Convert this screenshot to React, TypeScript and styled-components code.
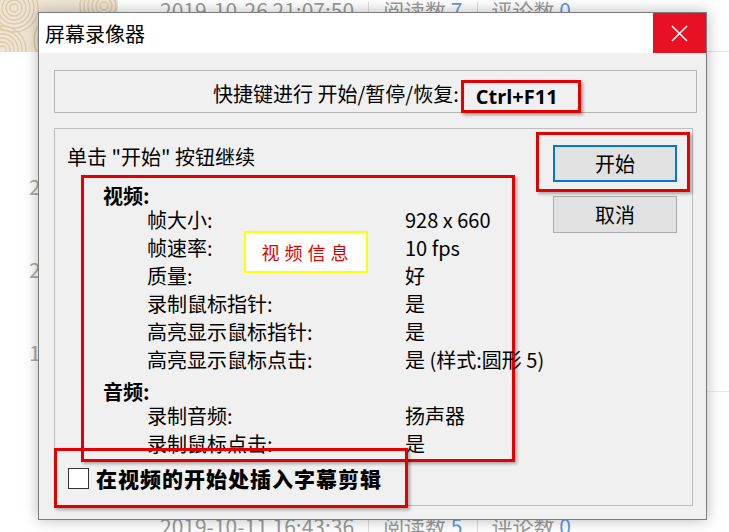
import React from "react"
import styled, { createGlobalStyle } from "styled-components"

const GlobalStyle = createGlobalStyle`
  html, body {
    margin: 0;
    padding: 0;
    background: #fff;
  }
  body {
    font-family: "Noto Sans CJK SC", "Noto Sans", sans-serif;
  }
`

const annotationRed = "#e30000"

const Page = styled.div`
  position: relative;
  width: 729px;
  height: 532px;
  overflow: hidden;
  background: #fff;
`

const Backdrop = styled.div`
  display: grid;
  grid-template-columns: 118px 1fr;
  grid-template-rows: 52px auto 1fr;
  height: 100%;
`

const Pattern = styled.svg`
  display: block;
  width: 118px;
  height: 52px;
  background: #efe5d4;
`

const HeaderCell = styled.div`
  border-bottom: 1px solid #eee3d2;
  overflow: hidden;
`

const Meta = styled.div<{ offset: number }>`
  margin-top: ${p => p.offset}px;
  padding-left: 42px;
  font-size: 21px;
  line-height: 28px;
  color: #9a9a9a;
  white-space: nowrap;
`

const Count = styled.span`
  color: #5f9bd8;
`

const Divider = styled.span`
  display: inline-block;
  width: 1px;
  height: 20px;
  margin: 0 14px;
  background: #dcdcdc;
  vertical-align: -3px;
`

const LeftMarks = styled.div`
  grid-row: 2 / 4;
  grid-column: 1;
  display: flex;
  flex-direction: column;
  gap: 62px;
  padding: 124px 0 0 29px;
  font-size: 21px;
  line-height: 21px;
  color: #a8a8a8;
`

const PostBody = styled.div`
  height: 339px;
  border-bottom: 1px solid #f1e8da;
`

const Footer = styled.div`
  padding-top: 120px;
`

const Dialog = styled.div`
  position: absolute;
  left: 38px;
  top: 12px;
  width: 669px;
  height: 508px;
  box-sizing: border-box;
  display: flex;
  flex-direction: column;
  border: 1px solid #7c7c7c;
  background: #f0f0f0;
  box-shadow: 0 0 14px rgba(0, 0, 0, 0.28);
`

const TitleBar = styled.div`
  display: flex;
  align-items: center;
  height: 40px;
  background: #fff;
`

const Title = styled.div`
  padding-left: 6px;
  font-size: 20px;
  color: #000;
`

const CloseButton = styled.div`
  margin-left: auto;
  align-self: stretch;
  width: 53px;
  display: flex;
  align-items: center;
  justify-content: center;
  background: #e81123;
`

const Content = styled.div`
  flex: 1;
  display: flex;
  flex-direction: column;
  min-height: 0;
  padding: 17px 9px 13px 15px;
`

const ShortcutBox = styled.div`
  height: 43px;
  box-sizing: border-box;
  display: flex;
  align-items: center;
  padding: 5px 0 0 158px;
  border: 1px solid #b5b5b5;
  font-size: 20px;
  line-height: 28px;
  color: #000;
  white-space: nowrap;
`

const Hotkey = styled.div`
  align-self: flex-end;
  height: 33px;
  box-sizing: border-box;
  margin: 0 0 -1px 2px;
  display: flex;
  align-items: center;
  padding: 0 20px 0 12px;
  border: 3px solid ${annotationRed};
  box-shadow: 2px 2px 3px rgba(0, 0, 0, 0.35);
  font-family: "Open Sans", "Noto Sans", sans-serif;
  font-weight: 700;
  font-size: 20px;
`

const GroupBox = styled.div`
  flex: 1;
  min-height: 0;
  margin: 15px 4px 0 0;
  display: grid;
  grid-template-columns: 1fr auto;
  border: 1px solid #bdbdbd;
`

const LeftPane = styled.div`
  display: flex;
  flex-direction: column;
`

const Prompt = styled.div`
  margin: 14px 0 0 12px;
  font-size: 20px;
  line-height: 28px;
  color: #000;
`

const InfoBox = styled.div`
  position: relative;
  width: 434px;
  box-sizing: border-box;
  margin: 4px 0 0 26px;
  padding: 8px 0 1px 19px;
  border: 3px solid ${annotationRed};
  box-shadow: 2px 2px 3px rgba(0, 0, 0, 0.3);
  font-size: 20px;
  color: #000;
`

const Heading = styled.div<{ spaced?: boolean }>`
  margin-top: ${p => (p.spaced ? 8 : 0)}px;
  font-weight: 700;
  line-height: 20px;
`

const InfoRow = styled.div`
  display: grid;
  grid-template-columns: 258px auto;
  padding-left: 44px;
  line-height: 28px;
  white-space: nowrap;
`

const Tag = styled.div`
  position: absolute;
  left: 160px;
  top: 53px;
  width: 124px;
  height: 42px;
  box-sizing: border-box;
  display: flex;
  align-items: center;
  justify-content: center;
  padding-left: 3px;
  border: 2px solid #ffff00;
  background: #fff;
  color: #e00000;
  font-size: 18px;
  letter-spacing: 5px;
`

const CheckAnnotation = styled.div`
  position: relative;
  width: 354px;
  height: 60px;
  box-sizing: border-box;
  margin: -14px 0 0 -1px;
  display: flex;
  align-items: center;
  gap: 7px;
  padding-left: 11px;
  border: 3px solid ${annotationRed};
  box-shadow: 2px 2px 3px rgba(0, 0, 0, 0.3);
`

const CheckBox = styled.span`
  width: 21px;
  height: 21px;
  box-sizing: border-box;
  border: 1px solid #333;
  background: #fff;
`

const CheckLabel = styled.span`
  font-size: 21px;
  font-weight: 900;
  letter-spacing: 1px;
  color: #000;
  white-space: nowrap;
`

const RightPane = styled.div`
  display: flex;
  flex-direction: column;
  align-items: flex-end;
  padding: 3px 2px 0 0;
`

const ButtonMark = styled.div`
  padding: 10px 10px 7px 14px;
  border: 3px solid ${annotationRed};
  box-shadow: 2px 2px 3px rgba(0, 0, 0, 0.3);
`

const Button = styled.div<{ primary?: boolean }>`
  width: 124px;
  height: 37px;
  box-sizing: border-box;
  display: flex;
  align-items: center;
  justify-content: center;
  margin-right: ${p => (p.primary ? 0 : 13)}px;
  margin-top: ${p => (p.primary ? 0 : 4)}px;
  border: ${p => (p.primary ? "2px solid #0078d7" : "1px solid #adadad")};
  background: #e1e1e1;
  font-size: 20px;
  color: #000;
`

const videoRows = [
  ["帧大小:", "928 x 660"],
  ["帧速率:", "10 fps"],
  ["质量:", "好"],
  ["录制鼠标指针:", "是"],
  ["高亮显示鼠标指针:", "是"],
  ["高亮显示鼠标点击:", "是 (样式:圆形 5)"],
]

const audioRows = [
  ["录制音频:", "扬声器"],
  ["录制鼠标点击:", "是"],
]

function PostMeta({ date, reads, offset }: { date: string; reads: number; offset: number }) {
  return (
    <Meta offset={offset}>
      {date}
      <Divider />
      阅读数 <Count>{reads}</Count>
      <Divider />
      评论数 <Count>0</Count>
    </Meta>
  )
}

function Swirls() {
  const centers = [
    [14, 8],
    [58, 40],
    [104, 6],
    [2, 50],
    [112, 50],
  ]
  return (
    <Pattern viewBox="0 0 118 52">
      {centers.map(([cx, cy]) =>
        [4, 8, 12, 16, 20, 24].map(r => (
          <circle
            key={`${cx}-${cy}-${r}`}
            cx={cx}
            cy={cy}
            r={r}
            fill="none"
            stroke="#dccaa8"
            strokeWidth="1.4"
          />
        ))
      )}
    </Pattern>
  )
}

export default function App() {
  return (
    <Page>
      <GlobalStyle />
      <Backdrop>
        <Swirls />
        <HeaderCell>
          <PostMeta date="2019-10-26 21:07:50" reads={7} offset={-4} />
        </HeaderCell>
        <LeftMarks>
          <span>2</span>
          <span>2</span>
          <span>1</span>
        </LeftMarks>
        <PostBody />
        <Footer>
          <PostMeta date="2019-10-11 16:43:36" reads={5} offset={0} />
        </Footer>
      </Backdrop>

      <Dialog>
        <TitleBar>
          <Title>屏幕录像器</Title>
          <CloseButton>
            <svg width="17" height="17" viewBox="0 0 17 17">
              <path d="M1 1 L16 16 M16 1 L1 16" stroke="#fff" strokeWidth="1.6" />
            </svg>
          </CloseButton>
        </TitleBar>

        <Content>
          <ShortcutBox>
            快捷键进行 开始/暂停/恢复:
            <Hotkey>Ctrl+F11</Hotkey>
          </ShortcutBox>

          <GroupBox>
            <LeftPane>
              <Prompt>单击 "开始" 按钮继续</Prompt>
              <InfoBox>
                <Heading>视频:</Heading>
                {videoRows.map(([label, value]) => (
                  <InfoRow key={label}>
                    <span>{label}</span>
                    <span>{value}</span>
                  </InfoRow>
                ))}
                <Heading spaced>音频:</Heading>
                {audioRows.map(([label, value]) => (
                  <InfoRow key={label}>
                    <span>{label}</span>
                    <span>{value}</span>
                  </InfoRow>
                ))}
                <Tag>视频信息</Tag>
              </InfoBox>
              <CheckAnnotation>
                <CheckBox />
                <CheckLabel>在视频的开始处插入字幕剪辑</CheckLabel>
              </CheckAnnotation>
            </LeftPane>

            <RightPane>
              <ButtonMark>
                <Button primary>开始</Button>
              </ButtonMark>
              <Button>取消</Button>
            </RightPane>
          </GroupBox>
        </Content>
      </Dialog>
    </Page>
  )
}
